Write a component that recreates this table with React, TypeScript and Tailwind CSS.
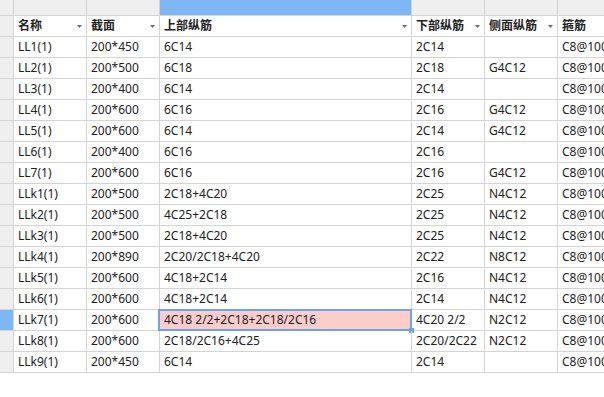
import React from 'react'

const COLS = [
  { key: 'name', label: '名称', w: 'w-[73px]' },
  { key: 'sec', label: '截面', w: 'w-[73px]' },
  { key: 'top', label: '上部纵筋', w: 'w-[252px]' },
  { key: 'bot', label: '下部纵筋', w: 'w-[73px]' },
  { key: 'side', label: '侧面纵筋', w: 'w-[73px]' },
  { key: 'stir', label: '箍筋', w: 'w-[73px]' },
]

// name, section, top, bottom, side
const ROWS: string[][] = [
  ['LL1(1)', '200*450', '6C14', '2C14', ''],
  ['LL2(1)', '200*500', '6C18', '2C18', 'G4C12'],
  ['LL3(1)', '200*400', '6C14', '2C14', ''],
  ['LL4(1)', '200*600', '6C16', '2C16', 'G4C12'],
  ['LL5(1)', '200*600', '6C14', '2C14', 'G4C12'],
  ['LL6(1)', '200*400', '6C16', '2C16', ''],
  ['LL7(1)', '200*600', '6C16', '2C16', 'G4C12'],
  ['LLk1(1)', '200*500', '2C18+4C20', '2C25', 'N4C12'],
  ['LLk2(1)', '200*500', '4C25+2C18', '2C25', 'N4C12'],
  ['LLk3(1)', '200*500', '2C18+4C20', '2C25', 'N4C12'],
  ['LLk4(1)', '200*890', '2C20/2C18+4C20', '2C22', 'N8C12'],
  ['LLk5(1)', '200*600', '4C18+2C14', '2C16', 'N4C12'],
  ['LLk6(1)', '200*600', '4C18+2C14', '2C14', 'N4C12'],
  ['LLk7(1)', '200*600', '4C18 2/2+2C18+2C18/2C16', '4C20 2/2', 'N2C12'],
  ['LLk8(1)', '200*600', '2C18/2C16+4C25', '2C20/2C22', 'N2C12'],
  ['LLk9(1)', '200*450', '6C14', '2C14', ''],
]

const SELECTED = 13

function Caret() {
  return (
    <svg width="5" height="3" viewBox="0 0 5 3" className="shrink-0">
      <path d="M0 0h5L2.5 3z" fill="#6b6b6b" />
    </svg>
  )
}

export default function App() {
  return (
    <div
      className="w-[604px] h-[397px] overflow-hidden bg-white text-[12px] leading-none text-[#222]"
      style={{ fontFamily: '"Noto Sans", "Noto Sans CJK SC", sans-serif' }}
    >
      <div className="w-[640px]">
        {/* column letters row */}
        <div className="flex h-[16px] border-b border-[#d4d4d4] bg-[#efefef]">
          <div className="w-[14px] shrink-0 border-r border-[#d4d4d4]" />
          {COLS.map((c, i) => (
            <div
              key={c.key}
              className={`${c.w} shrink-0 border-r border-[#d4d4d4] ${i === 2 ? 'bg-[#7fb7f5]' : ''}`}
            />
          ))}
        </div>

        {/* field header row */}
        <div className="flex h-[21px] border-b border-[#d4d4d4]">
          <div className="w-[14px] shrink-0 border-r border-[#d4d4d4] bg-[#efefef]" />
          {COLS.map((c, i) => (
            <div
              key={c.key}
              className={`${c.w} shrink-0 border-r border-[#d4d4d4] flex items-center justify-between pl-[4px] pr-[4px] font-bold`}
            >
              <span className="whitespace-nowrap">{c.label}</span>
              {i < 5 && <Caret />}
            </div>
          ))}
        </div>

        {ROWS.map((r, ri) => {
          const sel = ri === SELECTED
          return (
            <div key={r[0]} className="flex h-[21px] border-b border-[#d4d4d4]">
              <div
                className={`w-[14px] shrink-0 border-r border-[#d4d4d4] ${sel ? 'bg-[#7fb7f5]' : 'bg-[#efefef]'}`}
              />
              {[...r, 'C8@100'].map((v, ci) => (
                <div
                  key={ci}
                  className={`${COLS[ci].w} shrink-0 border-r border-[#d4d4d4] relative flex items-center pl-[4px] whitespace-nowrap overflow-hidden ${
                    sel && ci === 2 ? 'bg-[#ffcccc] overflow-visible' : ''
                  }`}
                >
                  {v}
                  {sel && ci === 2 && (
                    <>
                      <div className="absolute -left-[2px] -top-[1px] right-[-1px] bottom-[-1px] border-2 border-[#6aa6e6] pointer-events-none" />
                      <div className="absolute right-[-3px] bottom-[-3px] w-[5px] h-[5px] bg-[#6aa6e6]" />
                    </>
                  )}
                </div>
              ))}
            </div>
          )
        })}
      </div>
    </div>
  )
}
